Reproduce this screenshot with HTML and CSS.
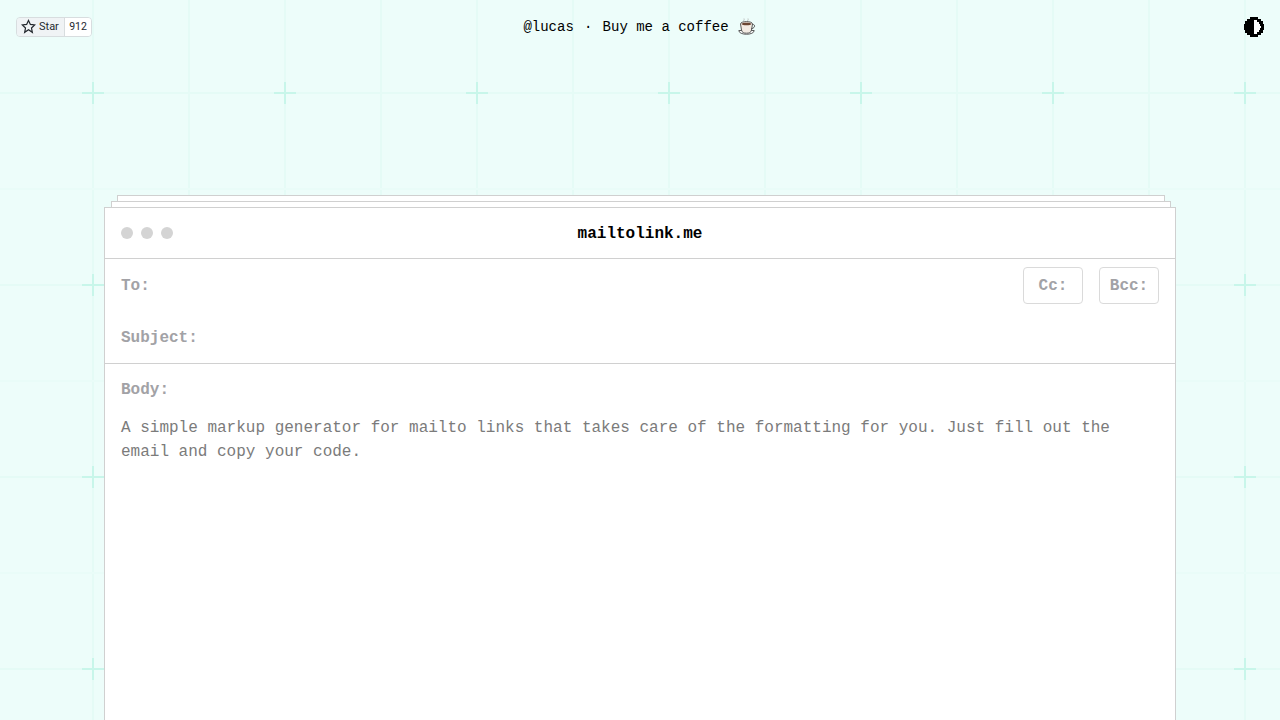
FILE: index.html
```html
<!DOCTYPE html>
<html lang="en">
<head>
    <meta charset="UTF-8">
    <title>mailtolink.me</title>
    <link rel="stylesheet" href="styles.css">
</head>
<body>
    <!-- Top bar -->
    <header class="topbar">
        <div class="github-btn">
            <a class="github-star">
                <svg class="star-icon" viewBox="0 0 16 16"><path d="M8 1.600l2 4.200 4.600.6-3.400 3.200.9 4.600L8 11.400l-4.100 2.800.9-4.600L1.400 6.400l4.600-.6z"/></svg>
                Star
            </a>
            <a class="github-count">912</a>
        </div>
        <div class="credit">
            <span>@lucas <span class="credit-dot">·</span> Buy me a coffee</span>
            <svg class="coffee-icon" viewBox="0 0 18 18">
                <path class="steam" d="M6 3c-1-1 1-1.500 0-2.500M10 3c-1-1 1-1.500 0-2.500"/>
                <path class="saucer" d="M.8 12.500c0 5 15.400 5 15.400 0z"/>
                <path class="cup" d="M2.500 6c0-3.200 12-3.200 12 0l-1 6c-.4 2.600-2.400 3.200-5 3.200s-4.600-.6-5-3.200z"/>
                <path class="drink" d="M3.600 6c0-1.800 9.800-1.800 9.800 0s-9.800 1.800-9.800 0z"/>
                <path class="cup-handle" d="M14.500 6.500c3-.4 3 3.600-1.300 4.300"/>
            </svg>
        </div>
        <svg class="theme-icon" viewBox="0 0 22 22" shape-rendering="crispEdges">
            <path d="M7 1h8v2h3v2h2v3h1v6h-1v3h-2v2h-3v2H7v-2H4v-2H2v-3H1V8h1V5h2V3h3z"/>
            <path class="theme-light" d="M11 4h3v2h2v2h1v2h1v2h-1v2h-1v2h-2v2h-3z"/>
        </svg>
    </header>

    <!-- Mail window -->
    <main class="mail">
        <div class="sheet sheet-back"></div>
        <div class="sheet sheet-mid"></div>
        <div class="window">
            <div class="title-bar">
                <div class="dots"><i></i><i></i><i></i></div>
                <h1>mailtolink.me</h1>
            </div>
            <div class="fields">
                <div class="field">
                    <label>To:</label>
                    <div class="copy-buttons">
                        <button>Cc:</button>
                        <button>Bcc:</button>
                    </div>
                </div>
                <div class="field">
                    <label>Subject:</label>
                </div>
            </div>
            <div class="body-field">
                <label>Body:</label>
                <p>A simple markup generator for mailto links that takes care of the formatting for you. Just fill out the email and copy your code.</p>
            </div>
        </div>
    </main>
</body>
</html>
```

FILE: styles.css
```css
html, body {
    margin: 0;
    height: 720px;
    overflow: hidden;
}

body {
    font-family: "Liberation Mono", "DejaVu Sans Mono", monospace;
    font-size: 16px;
    color: #000;
    background-color: #edfdfa;
    background-image: url("data:image/svg+xml,%3Csvg xmlns='http://www.w3.org/2000/svg' width='192' height='192'%3E%3Cg fill='%23e5fbf6'%3E%3Crect x='92' width='2' height='192'/%3E%3Crect y='92' width='192' height='2'/%3E%3Crect x='188' width='2' height='192'/%3E%3C/g%3E%3Crect y='188' width='192' height='2' fill='%23e9fcf8'/%3E%3Cg fill='%23c8f6ea'%3E%3Crect x='92' y='82' width='2' height='22'/%3E%3Crect x='82' y='92' width='22' height='2'/%3E%3C/g%3E%3C/svg%3E");
    background-size: 192px 192px;
}

/* Top bar */
.topbar {
    display: grid;
    grid-template-columns: 1fr auto 1fr;
    align-items: center;
    height: 20px;
    padding: 16px 15px 0 16px;
}

.github-btn {
    display: flex;
    width: 76px;
    height: 20px;
    box-sizing: border-box;
    font-family: Roboto, "Liberation Sans", sans-serif;
    font-size: 11px;
    color: #24292f;
    border: 1px solid #d8dddf;
    border-radius: 4px;
    overflow: hidden;
}

.github-star {
    display: flex;
    align-items: center;
    gap: 3px;
    width: 48px;
    padding-left: 4px;
    padding-bottom: 1px;
    box-sizing: border-box;
    background: #f0f3f5;
    border-right: 1px solid #d8dddf;
}

.star-icon {
    width: 15px;
    height: 15px;
    fill: none;
    stroke: #24292f;
    stroke-width: 1.3;
}

.github-count {
    flex: 1;
    font-size: 10.5px;
    text-align: center;
    line-height: 17px;
    background: #fff;
}

.credit {
    display: flex;
    align-items: center;
    gap: 9px;
    font-size: 14px;
    margin-right: 2px;
}

.credit-dot {
    display: inline-block;
    width: 12px;
    text-align: center;
}

.coffee-icon {
    width: 18px;
    height: 18px;
    fill: none;
    stroke: #4a4a4a;
    stroke-width: .9;
}

.coffee-icon .saucer {
    fill: #fff;
}

.coffee-icon .cup {
    fill: #f3ebe3;
}

.coffee-icon .drink {
    fill: #6b4632;
    stroke: none;
}

.coffee-icon .steam {
    stroke: #b9b9b9;
}

.theme-icon {
    width: 22px;
    height: 22px;
    fill: #000;
    justify-self: end;
}

.theme-light {
    fill: #fff;
}

/* Mail window */
.mail {
    position: relative;
    width: 1072px;
    margin: 171px auto 0;
}

.sheet {
    position: absolute;
    height: 20px;
    background: #fff;
    border: 1px solid #d0d0d0;
    box-sizing: border-box;
}

.sheet-back {
    top: -12px;
    left: 13px;
    right: 11px;
}

.sheet-mid {
    top: -6px;
    left: 7px;
    right: 5px;
}

.window {
    position: relative;
    height: 513px;
    background: #fff;
    border: 1px solid #d0d0d0;
    border-bottom: 0;
}

.title-bar {
    position: relative;
    height: 50px;
    border-bottom: 1px solid #d0d0d0;
}

.title-bar h1 {
    margin: 0;
    font-size: 16px;
    line-height: 53px;
    height: 50px;
    text-align: center;
}

.dots {
    position: absolute;
    top: 19px;
    left: 16px;
    display: flex;
    gap: 8px;
}

.dots i {
    width: 12px;
    height: 12px;
    border-radius: 50%;
    background: #d4d4d4;
}

label {
    font-weight: bold;
    color: #a2a2a6;
}

.fields {
    border-bottom: 1px solid #d0d0d0;
}

.field {
    display: flex;
    justify-content: space-between;
    align-items: center;
    padding: 0 16px;
    height: 52px;
}

.field label {
    padding-top: 2px;
}

.copy-buttons {
    display: flex;
    gap: 16px;
}

.copy-buttons button {
    width: 60px;
    height: 37px;
    padding: 2px 0 0;
    font-family: inherit;
    font-size: 16px;
    font-weight: bold;
    color: #a2a2a6;
    background: #fff;
    border: 1px solid #dadada;
    border-radius: 4px;
}

.body-field {
    padding: 14px 16px;
}

.body-field label {
    display: block;
    line-height: 24px;
}

.body-field p {
    margin: 14px 0 0;
    line-height: 24px;
    color: #7b7b7b;
}
```
